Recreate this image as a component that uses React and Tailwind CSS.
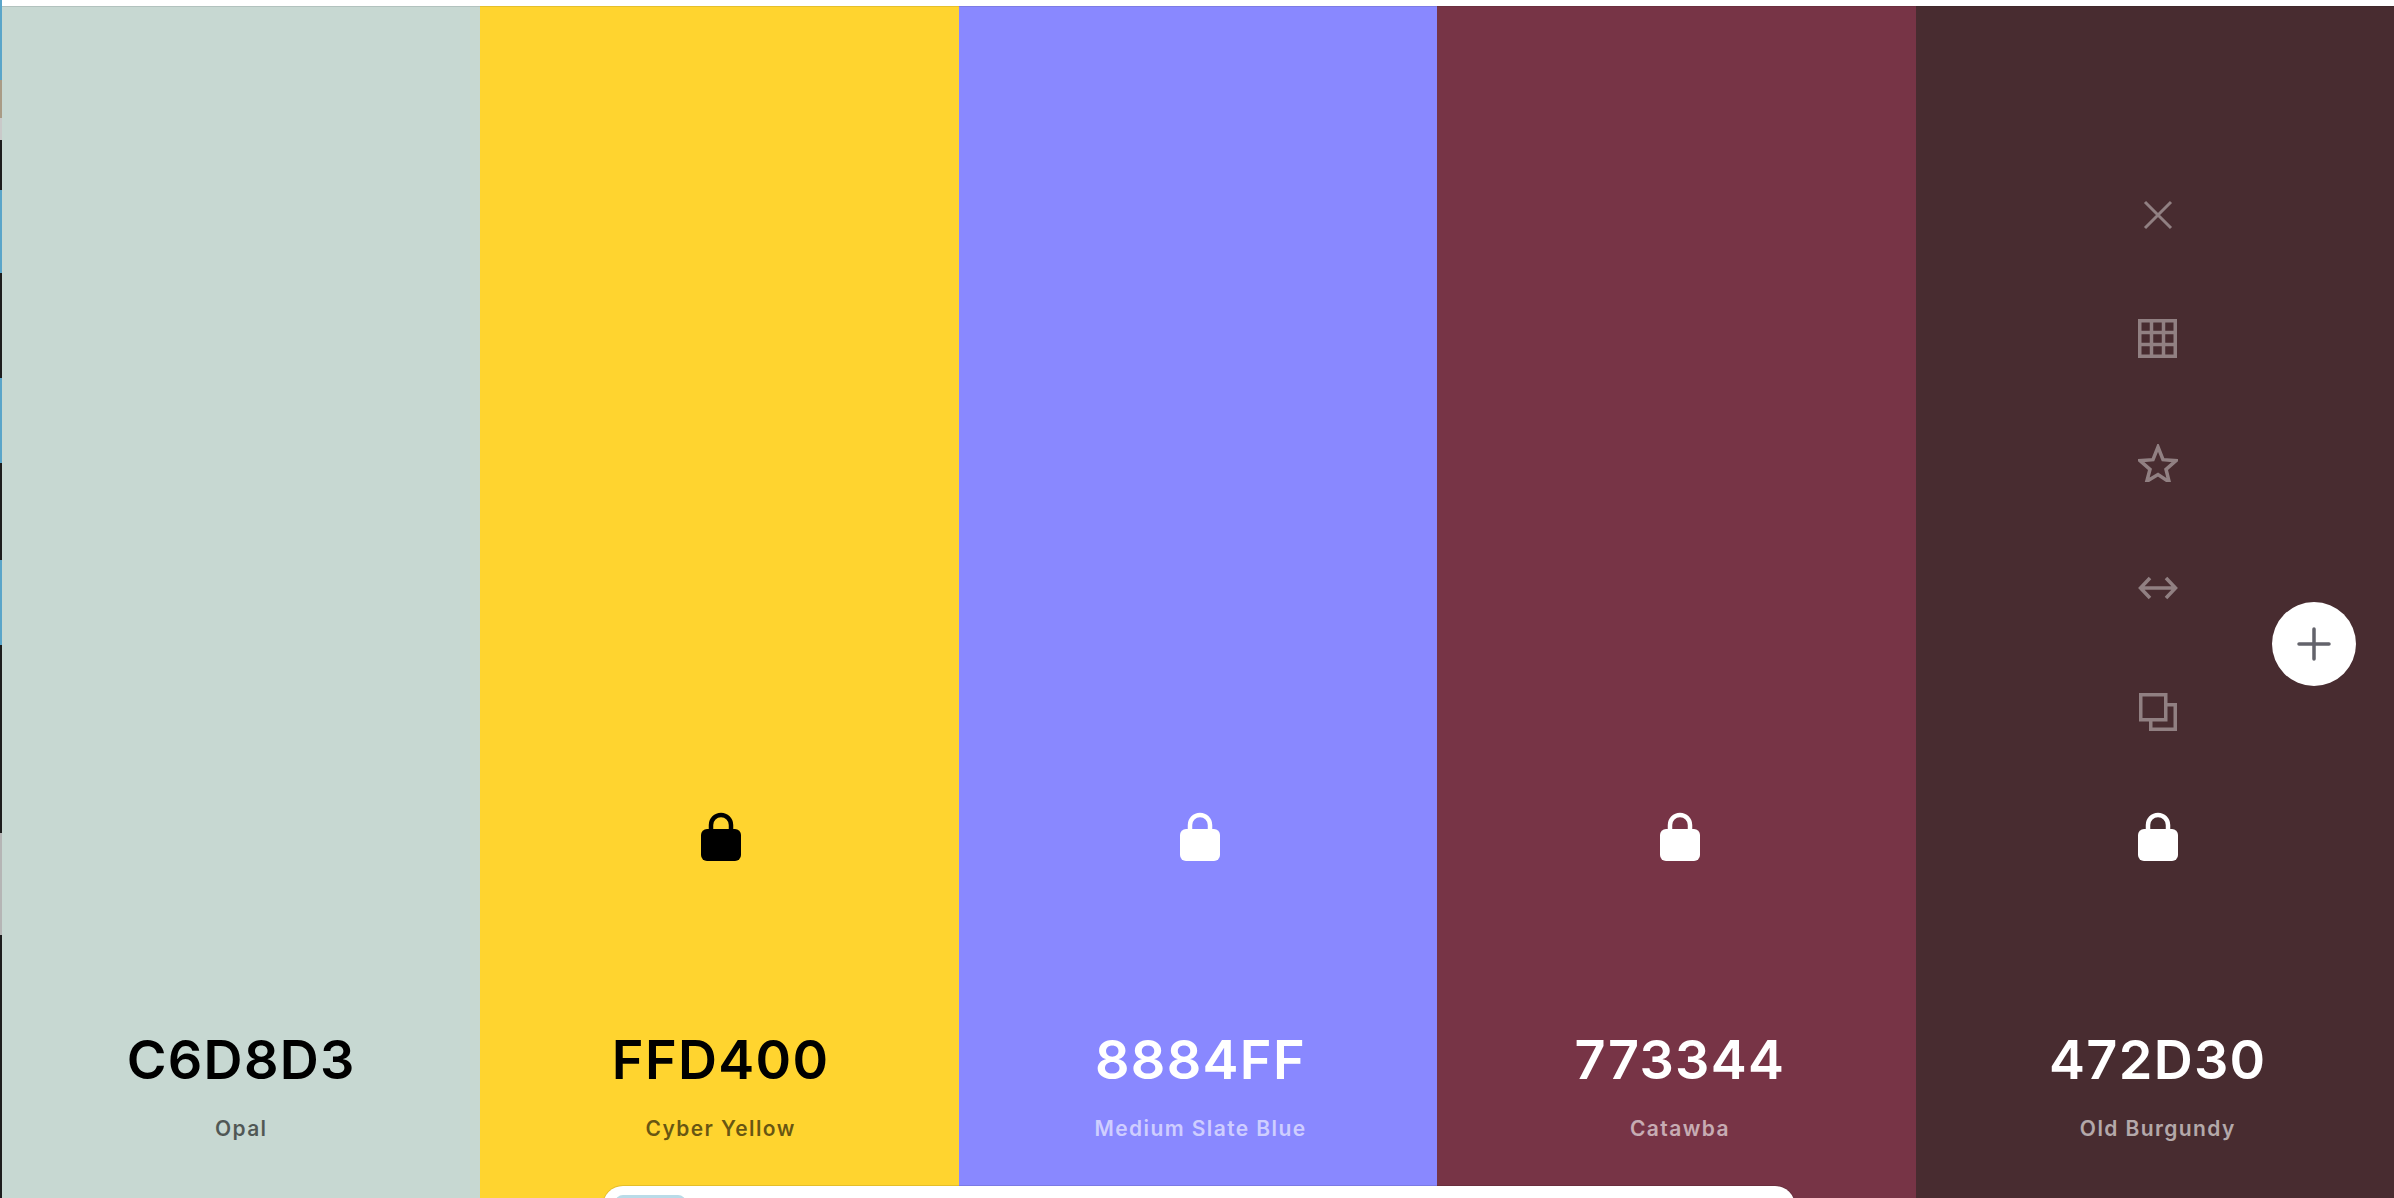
import React from "react";

const colors = [
  { hex: "C6D8D3", name: "Opal", bg: "bg-[#c7d8d2]", line: "border-[#b2c2be]", text: "text-black", sub: "text-black/60", pad: "pl-0" },
  { hex: "FFD400", name: "Cyber Yellow", bg: "bg-[#ffd42f]", line: "border-[#e5bf2a]", text: "text-black", sub: "text-black/60", lock: "#000", pad: "pl-[2px]" },
  { hex: "8884FF", name: "Medium Slate Blue", bg: "bg-[#8988ff]", line: "border-[#7c7be5]", text: "text-white", sub: "text-white/60", lock: "#fff", pad: "pl-[5px]" },
  { hex: "773344", name: "Catawba", bg: "bg-[#773446]", line: "border-[#6b2f3f]", text: "text-white", sub: "text-white/60", lock: "#fff", pad: "pl-[7px]" },
  { hex: "472D30", name: "Old Burgundy", bg: "bg-[#482c30]", line: "border-[#40282b]", text: "text-white", sub: "text-white/60", lock: "#fff", tools: true, pad: "pl-[6px]" },
];

const strip = [
  ["#5aa5c9", 80], ["#a99b85", 38], ["#c9c9c9", 22], ["#1d1d1d", 50], ["#5aa5c9", 83], ["#1d1d1d", 105],
  ["#5aa5c9", 85], ["#1d1d1d", 97], ["#5aa5c9", 85], ["#1d1d1d", 188], ["#b5b5b5", 102], ["#1d1d1d", 263],
];

function Lock({ color }) {
  return (
    <svg width="42" height="50" viewBox="0 0 42 50" className="block">
      <path d="M11 20V13a10 10 0 0 1 20 0v7" fill="none" stroke={color} strokeWidth="4.5" />
      <rect x="1" y="17" width="40" height="32" rx="6" fill={color} />
    </svg>
  );
}

function Tools() {
  return (
    <div className="absolute top-[188px] left-[6px] right-0 flex flex-col items-center text-white/40">
      <div className="flex h-[40px] items-center justify-center">
        <svg width="30" height="30" viewBox="0 0 30 30" fill="none" stroke="currentColor" strokeWidth="3">
          <path d="M2 2l26 26M28 2L2 28" />
        </svg>
      </div>
      <div className="mt-[83px] flex h-[40px] items-center justify-center">
        <svg width="39" height="39" viewBox="0 0 39 39" fill="none" stroke="currentColor" strokeWidth="3.5">
          <path d="M1.750 1.750h35.500v35.500h-35.500zM13.500 1.750v35.500M25.500 1.750v35.500M1.750 13.500h35.500M1.750 25.500h35.500" />
        </svg>
      </div>
      <div className="mt-[85px] flex h-[40px] items-center justify-center">
        <svg width="40" height="38" viewBox="0 0 40 38" fill="none" stroke="currentColor" strokeWidth="3.5">
          <path d="M20 3l5 12.700 13 1-10 8.600 3.200 12.700L20 30.600 8.800 37.300 12 25.300 2 16.700l13-1z" />
        </svg>
      </div>
      <div className="mt-[85px] flex h-[40px] items-center justify-center">
        <svg width="40" height="24" viewBox="0 0 40 24" fill="none" stroke="currentColor" strokeWidth="3.500">
          <path d="M3 12h34M12 2L2.500 12 12 22M28 2l9.500 10L28 22" />
        </svg>
      </div>
      <div className="mt-[84px] flex h-[40px] items-center justify-center">
        <svg width="38" height="38" viewBox="0 0 38 38" fill="none" stroke="currentColor" strokeWidth="3.500">
          <path d="M1.750 1.750h25v25h-25zM26.750 11.750h9.500v24.500h-24.500v-9.500" />
        </svg>
      </div>
    </div>
  );
}

export default function App() {
  return (
    <div className="relative h-[1198px] w-[2394px] overflow-hidden bg-white font-['Inter',sans-serif]">
      <div className="flex h-full">
        <div className="flex w-[2px] shrink-0 flex-col">
          {strip.map(([c, h], i) => (
            <div key={i} style={{ backgroundColor: c, height: h }} />
          ))}
        </div>
        <div className="flex h-full flex-1 flex-col">
          <div className="h-[6px] shrink-0 bg-white" />
          <div className="grid flex-1 grid-cols-5">
            {colors.map((c) => (
              <div key={c.hex} className={`relative flex flex-col items-center border-t-[1px] ${c.bg} ${c.line} ${c.pad}`}>
                {c.tools && <Tools />}
                <div className="mt-[805px] h-[50px]">{c.lock && <Lock color={c.lock} />}</div>
                <div className={`mt-[168px] text-[54px] leading-[60px] font-semibold tracking-[1.3px] ${c.text}`}>{c.hex}</div>
                <div className={`mt-[25px] text-[21px] leading-[28px] font-semibold tracking-[1.4px] ${c.sub}`}>{c.name}</div>
              </div>
            ))}
          </div>
        </div>
      </div>
      <button className="absolute left-[2272px] top-[602px] flex h-[84px] w-[84px] items-center justify-center rounded-full bg-white">
        <svg width="34" height="34" viewBox="0 0 34 34" fill="none" stroke="#63636b" strokeWidth="3.500" strokeLinecap="round">
          <path d="M17 2v30M2 17h30" />
        </svg>
      </button>
      <div className="absolute left-[603px] top-[1186px] h-[60px] w-[1192px] rounded-[20px] bg-white pt-[9px] pl-[12px] shadow-[0_0_0_1px_rgba(0,0,0,0.1)]">
        <div className="h-[40px] w-[71px] rounded-[8px] bg-[#b9dbe8]" />
      </div>
    </div>
  );
}
